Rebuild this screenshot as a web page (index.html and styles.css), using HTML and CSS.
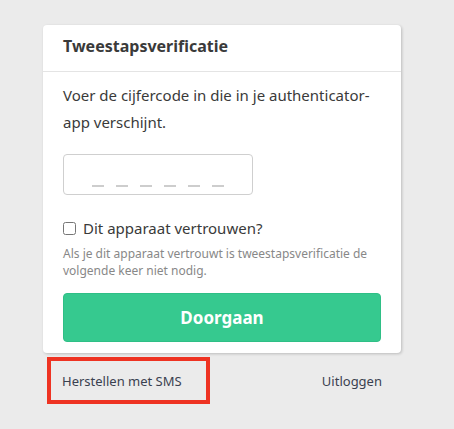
FILE: index.html
```html
<!DOCTYPE html>
<html lang="nl">
<head>
<meta charset="utf-8">
<link rel="stylesheet" href="styles.css">
</head>
<body>
<div class="wrap">
  <div class="card">
    <div class="card-head">Tweestapsverificatie</div>
    <div class="card-body">
      <p class="intro">Voer de cijfercode in die in je authenticator-app verschijnt.</p>
      <div class="code" role="textbox" aria-label="Code">
        <span class="slot"></span><span class="slot"></span><span class="slot"></span><span class="slot"></span><span class="slot"></span><span class="slot"></span>
      </div>
      <label class="trust"><input type="checkbox" class="cb"><span>Dit apparaat vertrouwen?</span></label>
      <p class="hint">Als je dit apparaat vertrouwt is tweestapsverificatie de volgende keer niet nodig.</p>
      <button class="btn">Doorgaan</button>
    </div>
  </div>
  <div class="links">
    <a class="link sms">Herstellen met SMS</a>
    <a class="link">Uitloggen</a>
  </div>
</div>
</body>
</html>
```
FILE: styles.css
```css
* { box-sizing: border-box; }
html, body { margin: 0; padding: 0; }
body {
  background: #ebebeb;
  font-family: "Noto Sans", Lato, sans-serif;
  color: #333;
  width: 454px;
  height: 429px;
}
.wrap {
  width: 358px;
  margin-left: 43px;
  padding-top: 25px;
}
.card {
  background: #fff;
  border-radius: 4px;
  box-shadow: 1px 1px 3px rgba(0,0,0,0.2);
}
.card-head {
  height: 47px;
  padding: 10px 20px 0;
  font-size: 16px;
  font-weight: 700;
  color: #3a3a3a;
  border-bottom: 1px solid #e4e4e4;
}
.card-body {
  padding: 10px 20px 11px;
}
.intro {
  margin: 0;
  font-size: 15px;
  line-height: 27px;
  color: #3a3a3a;
}
.code {
  display: flex;
  justify-content: center;
  align-items: flex-end;
  gap: 12px;
  margin-top: 18px;
  width: 190px;
  height: 41px;
  border: 1px solid #cfcfcf;
  border-radius: 4px;
  padding-bottom: 7px;
}
.slot {
  width: 12px;
  height: 2px;
  background: #cdcdcd;
}
.trust {
  display: flex;
  align-items: center;
  gap: 7px;
  margin-top: 23px;
  font-size: 15px;
  color: #3a3a3a;
}
.cb {
  margin: 0;
  width: 13px;
  height: 13px;
}
.hint {
  margin: 7px 0 0;
  font-size: 12px;
  line-height: 17px;
  color: #888;
}
.btn {
  display: block;
  width: 100%;
  height: 49px;
  margin-top: 14px;
  border: 1px solid #2fbf86;
  border-radius: 4px;
  background: #36c98f;
  color: #fff;
  font-family: inherit;
  font-size: 17px;
  font-weight: 700;
}
.links {
  display: flex;
  justify-content: space-between;
  align-items: center;
  padding-left: 4px;
  padding-right: 19px;
  margin-top: 4px;
}
.link {
  font-size: 13px;
  color: #3a4150;
}
.sms {
  display: flex;
  align-items: center;
  width: 163px;
  height: 47px;
  border: 4px solid #ee3322;
  padding-left: 11px;
}
```
